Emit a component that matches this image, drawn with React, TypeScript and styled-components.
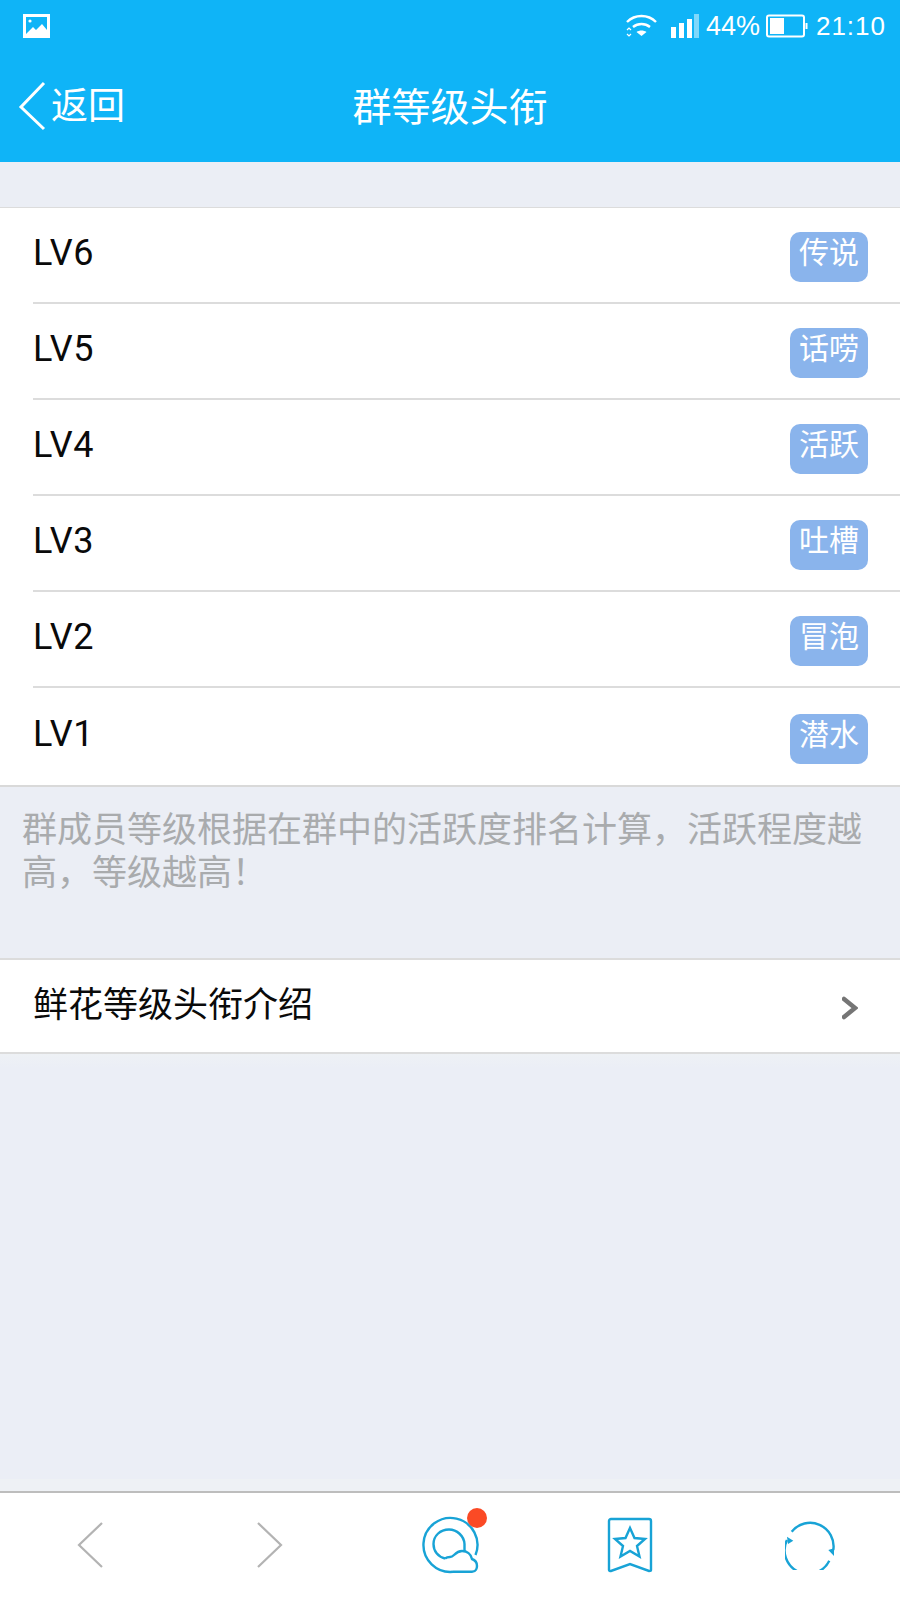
import * as React from 'react';
import styled, { createGlobalStyle } from 'styled-components';

const GlobalStyle = createGlobalStyle`
	html, body { margin: 0; padding: 0; }
	body { background: #ebeef5; font-family: "Roboto", "Noto Sans CJK SC", sans-serif; }
`;

const cjk = `"Noto Sans CJK SC", "Noto Sans", sans-serif`;

const levels = [
	{ level: 'LV6', title: '传说' },
	{ level: 'LV5', title: '话唠' },
	{ level: 'LV4', title: '活跃' },
	{ level: 'LV3', title: '吐槽' },
	{ level: 'LV2', title: '冒泡' },
	{ level: 'LV1', title: '潜水' }
];

const Page = styled.div`
	width: 900px;
	height: 1600px;
	display: flex;
	flex-direction: column;
	background: #ebeef5;
	overflow: hidden;
`;

const Header = styled.header`
	height: 162px;
	flex: none;
	display: flex;
	flex-direction: column;
	background: #0fb4f7;
	color: #fff;
`;

const StatusBar = styled.div`
	height: 52px;
	display: flex;
	align-items: center;
	justify-content: space-between;
	padding: 0 14px 0 23px;
`;

const StatusRight = styled.div`
	display: flex;
	align-items: center;
	gap: 6px;
	font-family: "Liberation Sans", sans-serif;
	font-size: 27px;
`;

const SignalIcon = styled.svg`
	margin-left: 8px;
	margin-right: 1px;
`;

const Clock = styled.span`
	margin-left: 2px;
	font-size: 26px;
	letter-spacing: 1px;
`;

const NavBar = styled.div`
	flex: 1;
	display: grid;
	grid-template-columns: 1fr auto 1fr;
	align-items: center;
	padding: 0 0 6px 18px;
`;

const Back = styled.div`
	display: flex;
	align-items: center;
	gap: 3px;
	margin-top: 3px;
	font-family: ${cjk};
	font-size: 37px;
	line-height: 48px;
`;

const BackLabel = styled.span`
	margin-top: -5px;
`;

const Title = styled.h1`
	margin: 0 18px 0 0;
	font-family: ${cjk};
	font-weight: 400;
	font-size: 39px;
	line-height: 48px;
`;

const List = styled.section`
	margin-top: 45px;
	background: #fff;
	border-top: 1px solid #dcdcdc;
	border-bottom: 2px solid #d9d9d9;
`;

const Row = styled.div<{ $last?: boolean }>`
	height: 96.1px;
	margin-left: 33px;
	padding: 0 32px 0 0;
	box-sizing: border-box;
	display: flex;
	align-items: center;
	justify-content: space-between;
	border-bottom: ${(p) => (p.$last ? 'none' : '2px solid #dcdcdc')};
`;

const Level = styled.span`
	font-family: "Roboto", sans-serif;
	font-size: 36px;
	letter-spacing: 0.5px;
	color: #0a0a0a;
	margin-top: -5px;
`;

const Badge = styled.span`
	width: 78px;
	height: 50px;
	margin-top: 4px;
	border-radius: 10px;
	background: #8ab4ec;
	color: #fff;
	font-family: ${cjk};
	font-size: 30px;
	line-height: 36px;
	text-align: center;
`;

const Note = styled.p`
	margin: 0;
	padding: 18px 22px 0;
	height: 171px;
	box-sizing: border-box;
	font-family: ${cjk};
	font-size: 35px;
	line-height: 43px;
	color: #a9abad;
`;

const LinkRow = styled.div`
	height: 96px;
	padding: 0 42px 0 33px;
	display: flex;
	align-items: center;
	justify-content: space-between;
	background: #fff;
	border-top: 2px solid #dcdcdc;
	border-bottom: 2px solid #dcdcdc;
	font-family: ${cjk};
	font-size: 35px;
	color: #0a0a0a;
	box-sizing: border-box;
`;

const LinkLabel = styled.span`
	margin-top: -8px;
`;

const LinkArrow = styled.svg`
	margin-top: 4px;
	fill: none;
	stroke: #757575;
	stroke-width: 4.5;
	stroke-linecap: round;
`;

const Spacer = styled.div`
	flex: 1;
	background: linear-gradient(#eef1f5 0, #ebeef6 14px, #ebeef6 calc(100% - 12px), #eef1f5 calc(100% - 12px));
`;

const BottomBar = styled.nav`
	height: 109px;
	flex: none;
	padding-bottom: 3px;
	box-sizing: border-box;
	background: #fff;
	border-top: 2px solid #bdbdbd;
	display: grid;
	grid-template-columns: repeat(5, 1fr);
	place-items: center;
`;

const BarIcon = styled.svg<{ $grey?: boolean }>`
	display: block;
	fill: none;
	stroke: ${(p) => (p.$grey ? '#b3b3b3' : '#18a3d6')};
	stroke-width: ${(p) => (p.$grey ? 2.2 : 2.4)};
`;

const RingSlot = styled.div`
	position: relative;
`;

const Dot = styled.span`
	position: absolute;
	left: 47px;
	top: -7px;
	width: 20px;
	height: 20px;
	border-radius: 50%;
	background: #fb4a25;
`;

const App: React.FunctionComponent = () => {
	return (
		<Page>
			<GlobalStyle />
			<Header>
				<StatusBar>
					<svg width="27" height="24" viewBox="0 0 27 24">
						<path fill="#fff" d="M0 0h27v24H0z" />
						<path fill="#0fb4f7" d="M3 3h21v13l-5-6-6 6-3-3-7 7z" />
						<circle cx="7" cy="7" r="1.6" fill="#fff" />
					</svg>
					<StatusRight>
						<svg width="31" height="24" viewBox="0 0 31 24" fill="none" stroke="#fff" strokeWidth="2.4">
							<path d="M1 8c8-8 21-8 29 0M7 13c5-4 12-4 17 0" />
							<path d="M15.500 22l-5-4c3-2 7-2 10 0z" fill="#fff" stroke="none" />
							<path d="M1 16l2-2 2 2M1 20l2 2 2-2" strokeWidth="1.2" />
						</svg>
						<SignalIcon width="28" height="24" viewBox="0 0 28 24">
							<path fill="#fff" d="M0 13h5v11H0zM8 9h5v15H8zM16 5h5v19h-5z" />
							<path fill="#7fd8fb" d="M23 0h5v24h-5z" />
						</SignalIcon>
						<span>44%</span>
						<svg width="42" height="24" viewBox="0 0 42 24">
							<rect x="1" y="1.5" width="37" height="21" rx="2" fill="none" stroke="#fff" strokeWidth="2" />
							<path fill="#fff" d="M4 4h14v16H4zM39.500 9h2v6h-2z" />
						</svg>
						<Clock>21:10</Clock>
					</StatusRight>
				</StatusBar>
				<NavBar>
					<Back>
						<svg width="30" height="50" viewBox="0 0 30 50" fill="none" stroke="#fff" strokeWidth="3">
							<path d="M26 2L3 26l23 22" />
						</svg>
						<BackLabel>返回</BackLabel>
					</Back>
					<Title>群等级头衔</Title>
				</NavBar>
			</Header>
			<List>
				{levels.map((item, i) => (
					<Row key={item.level} $last={i === levels.length - 1}>
						<Level>{item.level}</Level>
						<Badge>{item.title}</Badge>
					</Row>
				))}
			</List>
			<Note>群成员等级根据在群中的活跃度排名计算，活跃程度越高，等级越高！</Note>
			<LinkRow>
				<LinkLabel>鲜花等级头衔介绍</LinkLabel>
				<LinkArrow width="16" height="24" viewBox="0 0 16 24">
					<path d="M2 3l11 9-11 9" />
				</LinkArrow>
			</LinkRow>
			<Spacer />
			<BottomBar>
				<BarIcon $grey width="26" height="46" viewBox="0 0 26 46">
					<path d="M25 1L2 23l23 22" />
				</BarIcon>
				<BarIcon $grey width="26" height="46" viewBox="0 0 26 46">
					<path d="M1 1l23 22L1 45" />
				</BarIcon>
				<RingSlot>
					<BarIcon width="60" height="60" viewBox="0 0 60 60">
						<path d="M33 56.800A27 27 0 1 1 55.500 40" />
						<path d="M33 56.800h19c4 0 5-3.800 5-5.800 0-4-2-6-5-7-1-5-5-8-10-8-4 0-6 2-8 4-1 1-2 2-4 2-2 0-3 0-5 1.500" />
						<path d="M25 43.500C18 42 13.500 36 13.500 29c0-8 6.500-14.500 15.500-14.500 8 0 15 6.500 15.500 14.500v7" />
					</BarIcon>
					<Dot />
				</RingSlot>
				<BarIcon width="46" height="56" viewBox="0 0 46 56">
					<path d="M2 4c0-1 1-2 2-2h38c1 0 2 1 2 2v49c0 1-1 1-2 1l-19-7-19 7c-1 0-2 0-2-1z" />
					<path d="M23 11l4.500 10 10.500 1-8 7 2.500 10.500L23 34l-9.500 5.500L16 29l-8-7 10.500-1z" />
				</BarIcon>
				<BarIcon width="50" height="50" viewBox="0 0 50 50">
					<path d="M6.700 11.700A23.500 23.500 0 0 1 48.300 30" />
					<path d="M44.300 40.700A23.500 23.500 0 0 1 2 20" />
					<path d="M2 16.700l6.300 4L3 24z M49 36l-5.700-6 5.700-1.700z" fill="#18a3d6" stroke="none" />
				</BarIcon>
			</BottomBar>
		</Page>
	);
};

export default App;
